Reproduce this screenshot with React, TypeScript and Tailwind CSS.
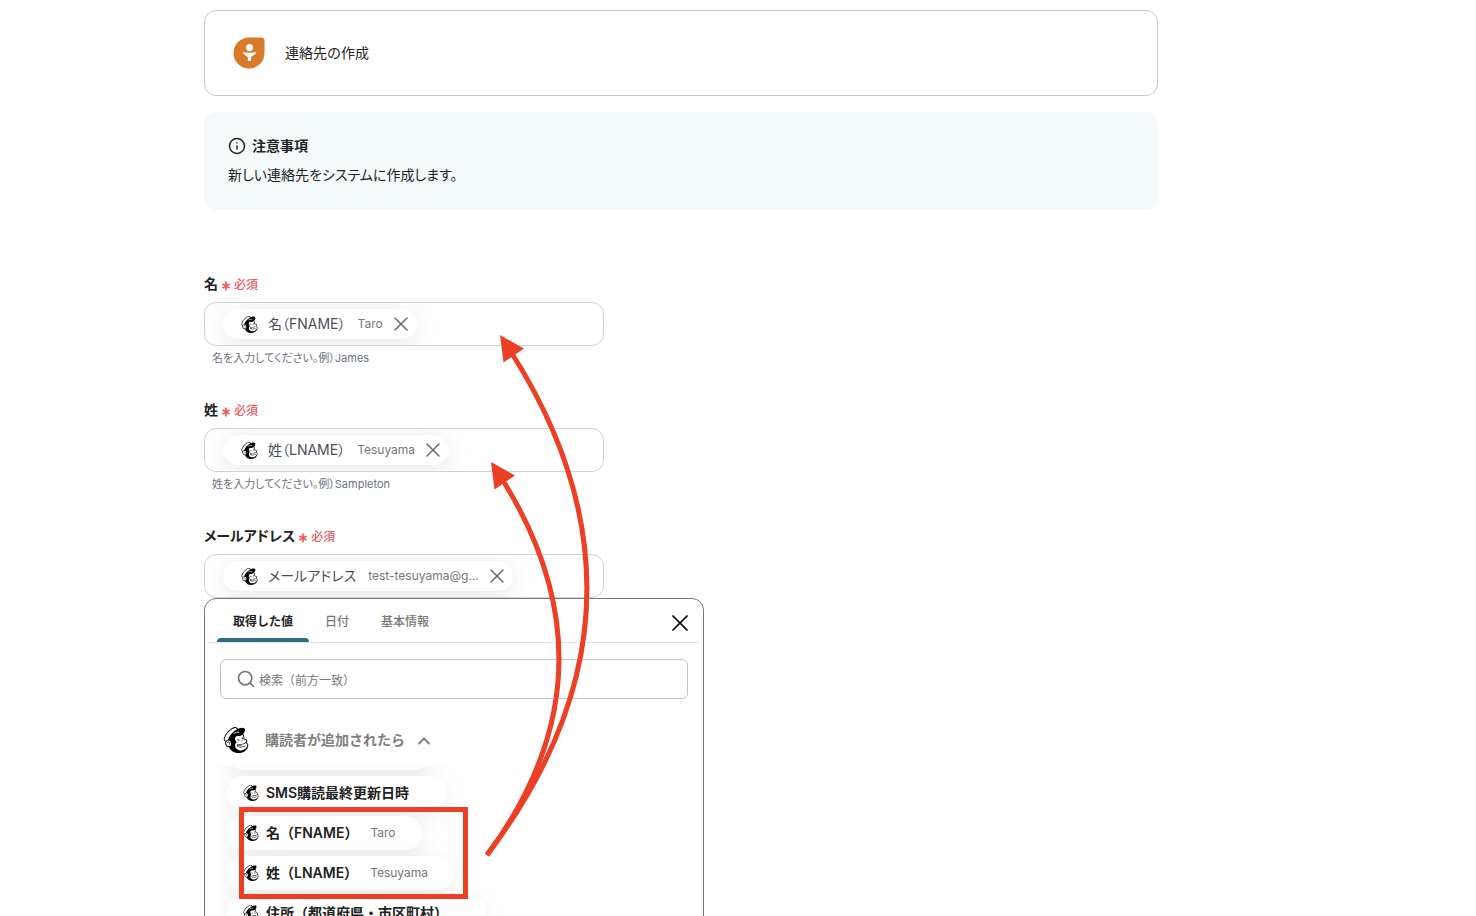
import { useState } from "react";
import { ChevronUp, Info, Search, X } from "lucide-react";
import { SiMailchimp } from "react-icons/si";

interface Field {
  id: string;
  label: string;
  chip: string;
  value: string;
  hint?: string;
}

interface FetchedValue {
  name: string;
  sample?: string;
}

const FIELDS: Field[] = [
  { id: "first-name", label: "名", chip: "名（FNAME）", value: "Taro", hint: "名を入力してください。例）James" },
  { id: "last-name", label: "姓", chip: "姓（LNAME）", value: "Tesuyama", hint: "姓を入力してください。例）Sampleton" },
  { id: "email", label: "メールアドレス", chip: "メールアドレス", value: "test-tesuyama@g..." },
];

const TABS = ["取得した値", "日付", "基本情報"];

const VALUES: FetchedValue[] = [
  { name: "SMS購読最終更新日時" },
  { name: "名（FNAME）", sample: "Taro" },
  { name: "姓（LNAME）", sample: "Tesuyama" },
  { name: "住所（都道府県・市区町村）" },
];

function ContactIcon() {
  return (
    <svg width="32" height="32" viewBox="0 0 32 32" aria-hidden="true">
      <path d="M16 .5h12.500A3 3 0 0 1 31.500 3.500V16A15.500 15.500 0 1 1 16 .5z" fill="#d97a2b" />
      <circle cx="16.500" cy="10.500" r="3.500" fill="#fff" />
      <path d="M9.500 15c2 .5 4.500.8 7 .8s5-.3 7-.8c-.6 2-2.800 3.600-5.400 5v4h-3.200v-4c-2.600-1.400-4.800-3-5.400-5z" fill="#fff" />
    </svg>
  );
}

function Required() {
  return (
    <span className="flex items-center gap-1 pt-0.5 text-xs font-medium text-[#ec5a62]">
      <svg width="8" height="10" viewBox="0 0 8 10" aria-hidden="true" className="mt-0.5">
        <path d="M4 .6v8.800M.4 2.900l7.200 4.200M7.600 2.900L.4 7.100" stroke="currentColor" strokeWidth="1.700" />
      </svg>
      必須
    </span>
  );
}

function FormField({ field }: { field: Field }) {
  return (
    <div>
      <div className="flex h-6 items-center gap-1">
        <span id={field.id} className="text-sm font-semibold text-[#222]">
          {field.label}
        </span>
        <Required />
      </div>
      <div
        role="group"
        aria-labelledby={field.id}
        className="mt-1.5 flex h-11 max-w-[400px] items-center overflow-hidden rounded-xl border border-[#cdd1da] px-[18px]"
      >
        <div className="flex h-[30px] items-center rounded-full bg-white pr-1 pl-[18px] shadow-[0_4px_24px_rgba(0,0,0,0.1)]">
          <SiMailchimp className="size-[17px] text-black" />
          <span className="ml-2.5 text-sm text-[#4b4f58]">{field.chip}</span>
          <span className="ml-3 text-xs text-[#777]">{field.value}</span>
          <button type="button" aria-label={`${field.chip}を削除`} className="ml-1.5 text-[#666]">
            <X size={24} strokeWidth={1.5} />
          </button>
        </div>
      </div>
      {field.hint && <p className="mt-1 pl-2 text-[11px] leading-4 text-[#6b7280]">{field.hint}</p>}
    </div>
  );
}

function ValuePicker() {
  const [tab, setTab] = useState(TABS[0]);
  const [query, setQuery] = useState("");

  return (
    <section className="h-[400px] max-w-[500px] rounded-xl border border-[#777] bg-white">
      <div className="mx-[3px] flex items-stretch border-b border-[#e2e2e2] pr-1.5 pl-[9px]">
        <div role="tablist" className="flex">
          {TABS.map((t) => (
            <button
              key={t}
              type="button"
              role="tab"
              aria-selected={t === tab}
              onClick={() => setTab(t)}
              className={`flex h-[43px] flex-col items-stretch justify-between text-xs ${
                t === tab ? "font-semibold text-[#222]" : "font-medium text-[#777]"
              }`}
            >
              <span className="px-4 pt-[15px]">{t}</span>
              {t === tab && <span className="h-1 rounded-t bg-[#2d6a80]" />}
            </button>
          ))}
        </div>
        <button type="button" aria-label="閉じる" className="mt-1 ml-auto text-black">
          <X size={28} strokeWidth={1.5} />
        </button>
      </div>

      <label className="mx-[15px] mt-4 flex h-10 items-center gap-[3px] rounded-md border border-[#c4c4c4] px-[15px]">
        <Search size={20} strokeWidth={2} className="shrink-0 text-[#777]" />
        <input
          type="text"
          aria-label="検索"
          value={query}
          onChange={(e) => setQuery(e.target.value)}
          placeholder="検索（前方一致）"
          className="w-full pt-[3px] text-xs outline-none placeholder:text-[#777]"
        />
      </label>

      <button
        type="button"
        aria-expanded="true"
        className="mt-[26px] ml-[18px] flex h-[30px] items-center text-sm font-semibold text-[#808080]"
      >
        <SiMailchimp className="size-[26px] text-black" />
        <span className="ml-4">購読者が追加されたら</span>
        <ChevronUp size={20} strokeWidth={2.5} className="mt-0.5 ml-[9px]" />
      </button>

      <div className="mx-2.5 mt-2.5 overflow-hidden pb-10">
        <ul className="-mt-[29px] flex flex-col items-start gap-1.5 pl-3">
          <li className="h-[34px] w-[204px] shrink-0 rounded-full bg-white shadow-[0_4px_24px_rgba(0,0,0,0.08)]" />
          {VALUES.map((v) => (
            <li key={v.name}>
              <button
                type="button"
                className="flex h-[34px] items-center rounded-full bg-white pr-[26px] pl-4 shadow-[0_4px_24px_rgba(0,0,0,0.08)]"
              >
                <SiMailchimp className="size-4 text-black" />
                <span className="ml-[7px] text-sm font-semibold text-[#222]">{v.name}</span>
                <span className="ml-3 text-xs text-[#777]">{v.sample}</span>
              </button>
            </li>
          ))}
        </ul>
      </div>
    </section>
  );
}

function Annotations() {
  return (
    <svg width="720" height="916" className="pointer-events-none absolute top-0 left-0" aria-hidden="true">
      <g fill="none" stroke="#eb4025" strokeWidth="5">
        <path d="M487 855Q674 608 511 352" />
        <path d="M487 855Q623 672 502 479" />
        <rect x="241.500" y="809.500" width="224" height="87" />
      </g>
      <g fill="#eb4025">
        <path d="M500 335l24 13.500-20.500 14z" />
        <path d="M491 462l24 13.500-20.500 14z" />
      </g>
    </svg>
  );
}

export default function App() {
  return (
    <div className="relative h-screen overflow-hidden bg-white font-['Inter','Noto_Sans_CJK_JP',sans-serif] text-[#222]">
      <main className="pt-2.5 pr-[318px] pl-[204px]">
        <header className="flex h-[86px] items-center gap-5 rounded-xl border border-[#c8c8c8] px-7">
          <ContactIcon />
          <h1 className="text-sm">連絡先の作成</h1>
        </header>

        <section className="mt-4 flex flex-col gap-2 rounded-xl bg-[#f4fafa] p-6">
          <h2 className="flex items-center gap-1.5 text-sm leading-5 font-semibold">
            <Info size={18} strokeWidth={2} />
            注意事項
          </h2>
          <p className="text-sm leading-[22px] [font-feature-settings:'palt']">新しい連絡先をシステムに作成します。</p>
        </section>

        <form className="mt-[62px] flex flex-col gap-8 [font-feature-settings:'palt']">
          {FIELDS.map((f) => (
            <FormField key={f.id} field={f} />
          ))}
        </form>
        <ValuePicker />
      </main>
      <Annotations />
    </div>
  );
}
